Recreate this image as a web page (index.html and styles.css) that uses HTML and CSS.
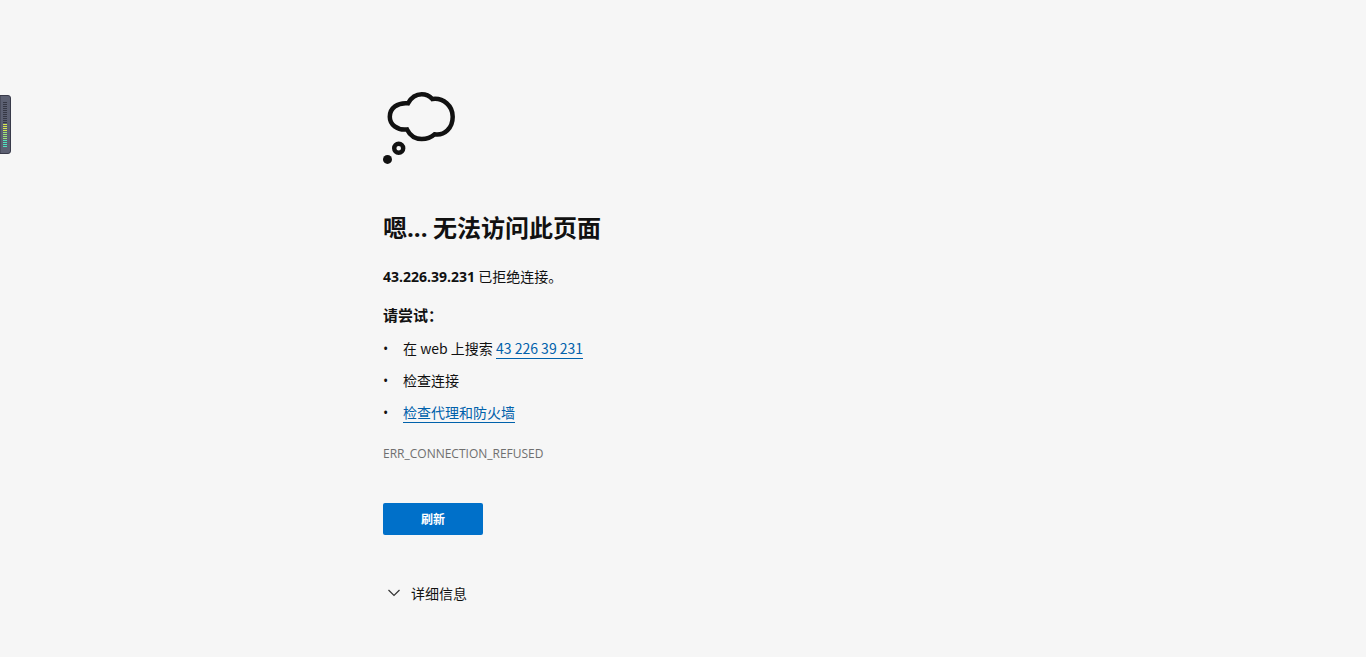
FILE: index.html
```html
<!DOCTYPE html>
<html lang="zh-CN">
<head>
    <meta charset="UTF-8">
    <meta name="viewport" content="width=device-width, initial-scale=1.0">
    <title>43.226.39.231</title>
    <link rel="stylesheet" href="styles.css">
</head>
<body>
    <div class="meter">
        <svg width="12" height="60" viewBox="0 0 12 60" aria-hidden="true">
            <path d="M0 .5H8Q10.500 .5 10.500 3V56Q10.500 58.500 8 58.500H0Z" fill="#5c6072" stroke="#383a49"/>
            <path d="M5 7v22" stroke="#353744" stroke-width="4" stroke-dasharray="1 1"/>
            <path d="M5 29v8" stroke="#d5e84c" stroke-width="4" stroke-dasharray="1 1"/>
            <path d="M5 37v8" stroke="#9be477" stroke-width="4" stroke-dasharray="1 1"/>
            <path d="M5 45v8" stroke="#4fe3bd" stroke-width="4" stroke-dasharray="1 1"/>
        </svg>
    </div>
    <main class="container">
        <svg class="cloud" width="72" height="72" viewBox="0 0 72 72" aria-hidden="true">
            <path d="M25 11.300C28 6 32.500 2.300 38.700 2.300C43 2.300 46.500 4 49.300 7C60.500 5.500 69.700 14 69.700 24.700C69.700 36 61.500 44 51.500 42.300C48 45.500 43.500 47 38.700 47C32.500 47 27 43.500 24 37.500C14 38.500 6.800 32.500 6.800 24.700C6.800 16 14.500 10.300 25 11.300Z" fill="none" stroke="#111" stroke-width="4.500"/>
            <circle cx="15.700" cy="56.300" r="4.500" fill="none" stroke="#111" stroke-width="4.400"/>
            <circle cx="4.500" cy="67.400" r="4.500" fill="#111"/>
        </svg>
        <h1>嗯<span class="latin">...</span> 无法访问此页面</h1>
        <p class="summary"><strong class="latin">43.226.39.231</strong> 已拒绝连接。</p>
        <h2>请尝试：</h2>
        <ul class="suggestions">
            <li>在 web 上搜索 <a href="#search">43 226 39 231</a></li>
            <li>检查连接</li>
            <li><a href="#proxy">检查代理和防火墙</a></li>
        </ul>
        <p class="error-code latin">ERR_CONNECTION_REFUSED</p>
        <button class="refresh" type="button">刷新</button>
        <button class="details" type="button">
            <svg width="12" height="8" viewBox="0 0 12 8" aria-hidden="true">
                <path d="M.5 1l5.500 5.500l5.500-5.500" fill="none" stroke="#333" stroke-width="1.200"/>
            </svg>
            详细信息
        </button>
    </main>
</body>
</html>
```
FILE: styles.css
```css
* {
    margin: 0;
    padding: 0;
    box-sizing: border-box;
}
body {
    background: #f6f6f6;
    color: #111;
    font-family: "Noto Sans CJK SC", sans-serif;
    font-size: 14px;
    line-height: 20px;
}
.latin {
    font-family: "Open Sans", sans-serif;
}
.meter {
    position: fixed;
    top: 95px;
    left: 0;
}
.meter svg {
    display: block;
}
.container {
    width: 100%;
    max-width: 600px;
    margin: 0 auto;
    padding: 92px 0 40px;
}
.cloud {
    display: block;
}
h1 {
    margin-top: 47px;
    font-size: 24px;
    line-height: 32px;
}
.summary {
    margin-top: 22px;
}
h2 {
    margin-top: 18px;
    font-size: 15px;
    line-height: 20px;
}
.suggestions {
    margin-top: 13px;
    list-style: none;
}
.suggestions li {
    margin-bottom: 12px;
}
.suggestions li::before {
    content: "•";
    display: inline-block;
    width: 20px;
    font-family: "Open Sans", sans-serif;
    line-height: 16px;
}
.suggestions a {
    color: #0061ab;
    text-decoration: none;
    border-bottom: 1px solid #0061ab;
}
.error-code {
    margin-top: 24px;
    color: #6f6f6f;
    font-size: 12px;
    font-weight: 500;
    line-height: 16px;
}
button {
    border: none;
    font-family: inherit;
    cursor: pointer;
}
.refresh {
    display: block;
    min-width: 100px;
    height: 32px;
    margin-top: 41px;
    padding-bottom: 2px;
    border-radius: 2px;
    background: #0070c9;
    color: #fff;
    font-size: 12px;
    font-weight: 700;
}
.details {
    display: flex;
    align-items: center;
    gap: 11px;
    margin-top: 48px;
    padding-left: 5px;
    background: none;
    color: #111;
    font-size: 14px;
    line-height: 20px;
}
```
